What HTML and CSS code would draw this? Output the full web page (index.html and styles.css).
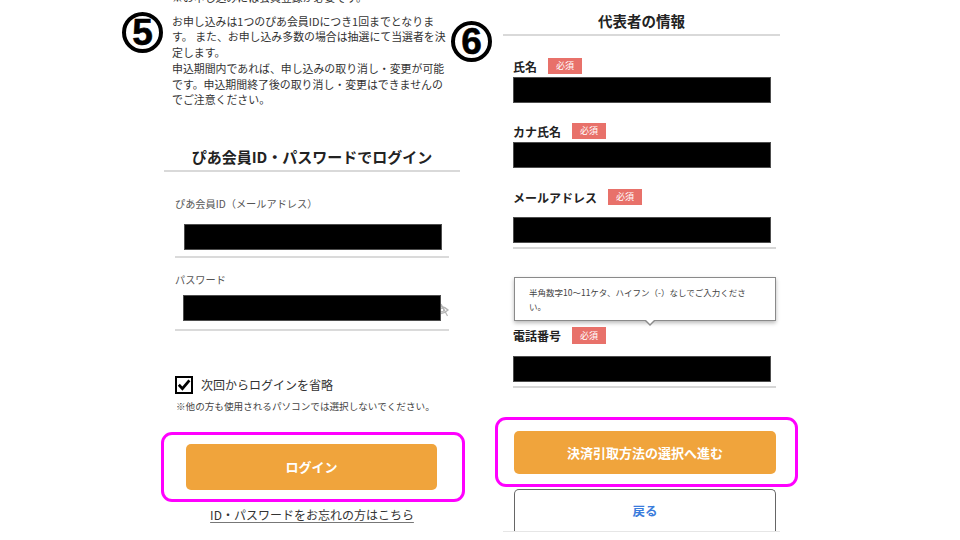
FILE: index.html
```html
<!DOCTYPE html>
<html lang="ja">
<head>
<meta charset="utf-8">
<title>ログイン / 代表者の情報</title>
<link rel="stylesheet" href="styles.css">
</head>
<body>
<div class="stage">
  <div class="mark mark-5">5</div>
  <div class="mark mark-6">6</div>

  <section class="panel login">
    <div class="notice">
      <p class="clip">※お申し込みには会員登録が必要です。</p>
      <p>お申し込みは1つのぴあ会員IDにつき1回までとなりま<br>す。 また、お申し込み多数の場合は抽選にて当選者を決<br>定します。</p>
      <p>申込期間内であれば、申し込みの取り消し・変更が可能<br>です。申込期間終了後の取り消し・変更はできませんの<br>でご注意ください。</p>
    </div>

    <h2 class="section-title">ぴあ会員ID・パスワードでログイン</h2>

    <div class="login-field field-id">
      <div class="login-label">ぴあ会員ID（メールアドレス）</div>
      <div class="masked-row"><div class="masked login-masked"></div></div>
    </div>

    <div class="login-field field-pw">
      <div class="login-label">パスワード</div>
      <div class="masked-row">
        <div class="masked login-masked"></div>
        <svg class="eye" width="8" height="14" viewBox="0 0 8 14"><path d="M0 3.5 C3 4 5.5 5.5 7 7 C5.5 8.5 3 10 0 10.5" fill="none" stroke="#b5b5b5" stroke-width="1.4"/><path d="M0 1 L6.5 13" stroke="#b5b5b5" stroke-width="1.2"/><circle cx="1" cy="7" r="1.8" fill="none" stroke="#b5b5b5" stroke-width="1.2"/></svg>
      </div>
    </div>

    <div class="remember">
      <svg class="check" width="18" height="18" viewBox="0 0 18 18"><rect x="1" y="1" width="16" height="16" fill="#fff" stroke="#000" stroke-width="2"/><path d="M3.8 8.8 L7.4 12.6 L14.4 4.4" fill="none" stroke="#000" stroke-width="2.8" stroke-linejoin="miter"/></svg>
      <span>次回からログインを省略</span>
    </div>
    <p class="remember-note">※他の方も使用されるパソコンでは選択しないでください。</p>

    <div class="highlight hl-login">
      <button class="primary-btn login-btn">ログイン</button>
    </div>

    <a class="forgot" href="#">ID・パスワードをお忘れの方はこちら</a>
  </section>

  <section class="panel rep">
    <h2 class="rep-title">代表者の情報</h2>

    <div class="rep-field f-name">
      <div class="rep-label"><span>氏名</span><span class="badge">必須</span></div>
      <div class="masked rep-masked"></div>
    </div>

    <div class="rep-field f-kana">
      <div class="rep-label"><span>カナ氏名</span><span class="badge">必須</span></div>
      <div class="masked rep-masked"></div>
    </div>

    <div class="rep-field f-mail lined">
      <div class="rep-label"><span>メールアドレス</span><span class="badge">必須</span></div>
      <div class="masked rep-masked gap"></div>
    </div>

    <div class="tooltip">半角数字10〜11ケタ、ハイフン（-）なしでご入力くださ<br>い。</div>

    <div class="rep-field f-tel lined">
      <div class="rep-label"><span>電話番号</span><span class="badge badge-tall">必須</span></div>
      <div class="masked rep-masked gap"></div>
    </div>

    <div class="highlight hl-next">
      <button class="primary-btn next-btn">決済引取方法の選択へ進む</button>
    </div>

    <button class="back-btn">戻る</button>
    <div class="panel-edge"></div>
  </section>
</div>
</body>
</html>
```

FILE: styles.css
```css
* { box-sizing: border-box; }

html, body {
  margin: 0;
  padding: 0;
}

body {
  width: 960px;
  height: 540px;
  overflow: hidden;
  background: #fff;
  color: #333;
  font-family: "Noto Sans CJK JP", "Noto Sans", sans-serif;
}

p { margin: 0; }

.stage {
  position: relative;
  display: flex;
  align-items: flex-start;
  gap: 43px;
  height: 540px;
  padding-left: 164px;
}

/* circled step numbers (annotations) */
.mark {
  position: absolute;
  width: 41px;
  height: 41px;
  border: 4px solid #000;
  border-radius: 50%;
  display: flex;
  align-items: center;
  justify-content: center;
  font-family: "Liberation Sans", Arial, sans-serif;
  font-weight: bold;
  font-size: 37px;
  line-height: 1;
  color: #000;
  -webkit-text-stroke: 0.6px #000;
}
.mark-5 { left: 122px; top: 12px; }
.mark-6 { left: 451px; top: 21px; }

.panel {
  display: flex;
  flex-direction: column;
}

/* ---------- left: login ---------- */
.login { width: 296px; }

.notice {
  padding-left: 8px;
  font-size: 10.9px;
  line-height: 15.7px;
  color: #333;
  white-space: nowrap;
  margin-top: -10px;
}
.notice .clip { margin-bottom: 8px; }

.section-title {
  margin: 39px 0 0;
  padding-bottom: 3px;
  border-bottom: 2px solid #d9d9d9;
  font-size: 15px;
  line-height: 20px;
  font-weight: bold;
  text-align: center;
  color: #222;
}

.login-field {
  margin: 0 11px;
  border-bottom: 2px solid #dadada;
}
.field-id { padding-bottom: 6px; }
.field-pw { padding-bottom: 8px; }

.login-label {
  font-size: 10.2px;
  line-height: 14px;
  color: #555;
}
.field-id .login-label { margin-top: 25px; }
.field-pw .login-label { margin-top: 15px; }

.masked-row {
  display: flex;
  align-items: center;
  padding-left: 9px;
}
.field-id .masked-row { margin-top: 13px; }
.field-pw .masked-row { margin-top: 8px; padding-left: 8px; }

.masked {
  background: #000;
  border: 1px solid #4d4d4d;
  height: 26px;
}
.login-masked { width: 258px; }

.eye { margin-top: 4px; }

.remember {
  display: flex;
  align-items: center;
  gap: 8px;
  margin: 45px 0 0 11px;
  font-size: 12px;
  line-height: 18px;
  color: #333;
}
.check { flex: none; }

.remember-note {
  margin: 5px 0 0 12px;
  font-size: 9.6px;
  line-height: 14px;
  color: #444;
  white-space: nowrap;
}

.highlight {
  border: 3px solid #ff00ff;
  border-radius: 11px;
  background: #fff;
}
.hl-login {
  margin: 19px -5px 0 -3px;
  padding: 9px 25px 9px 22px;
}

.primary-btn {
  display: block;
  width: 100%;
  border: none;
  border-radius: 5px;
  background: #f0a43c;
  color: #fff;
  font-family: inherit;
  font-weight: bold;
  font-size: 13px;
  padding: 0;
}
.login-btn { height: 46px; }

.forgot {
  margin-top: 5px;
  font-size: 12px;
  line-height: 16px;
  text-align: center;
  color: #333;
  text-decoration: underline;
  text-decoration-color: #777;
  text-underline-offset: 2px;
}

/* ---------- right: representative ---------- */
.rep { width: 277px; }

.rep-title {
  margin: 11px 0 0;
  padding-bottom: 3px;
  border-bottom: 2px solid #d9d9d9;
  font-size: 14.5px;
  line-height: 20px;
  font-weight: bold;
  text-align: center;
  color: #222;
}

.rep-field {
  margin-left: 10px;
  width: 263px;
}
.f-name { margin-top: 22px; }
.f-kana { margin-top: 20px; }
.f-mail { margin-top: 21px; }
.f-tel { margin-top: 6px; }

.lined {
  padding-bottom: 4px;
  border-bottom: 2px solid #d6d6d6;
}

.rep-label {
  display: flex;
  align-items: center;
  gap: 11px;
  height: 16px;
  font-size: 12px;
  font-weight: bold;
  color: #222;
}
.f-tel .rep-label { height: 17px; }

.badge {
  display: inline-block;
  width: 34px;
  height: 16px;
  line-height: 16px;
  background: #e8716a;
  color: #fff;
  font-size: 9px;
  font-weight: normal;
  text-align: center;
}
.badge-tall { height: 17px; line-height: 17px; }

.rep-masked {
  width: 258px;
  margin-top: 3px;
}
.rep-masked.gap { margin-top: 12px; }

.tooltip {
  position: relative;
  margin: 28px 0 0 11px;
  width: 262px;
  padding: 7px 10px 7px 14px;
  border: 1px solid #8a8a8a;
  background: #fff;
  box-shadow: 0 2px 4px rgba(0, 0, 0, 0.28);
  font-size: 8.5px;
  line-height: 14px;
  color: #444;
  white-space: nowrap;
}
.tooltip::before,
.tooltip::after {
  content: "";
  position: absolute;
  left: 129px;
  border-style: solid;
  border-color: transparent;
}
.tooltip::before {
  top: 100%;
  border-width: 6px 6px 0 6px;
  border-top-color: #8a8a8a;
}
.tooltip::after {
  top: calc(100% - 1px);
  left: 130px;
  border-width: 5px 5px 0 5px;
  border-top-color: #fff;
}

.hl-next {
  margin: 29px 0 0 -8px;
  width: 303px;
  padding: 11px 19px 10px 16px;
}
.next-btn { height: 43px; }

.back-btn {
  margin: 2px 0 0 11px;
  width: 262px;
  height: 42px;
  border: 1px solid #666;
  border-bottom: none;
  border-radius: 5px 5px 0 0;
  background: #fff;
  color: #3a7cdc;
  font-family: inherit;
  font-size: 12.5px;
  font-weight: bold;
  line-height: 40px;
  padding: 0;
}

.panel-edge {
  height: 1px;
  background: #e6e6e6;
}
```
